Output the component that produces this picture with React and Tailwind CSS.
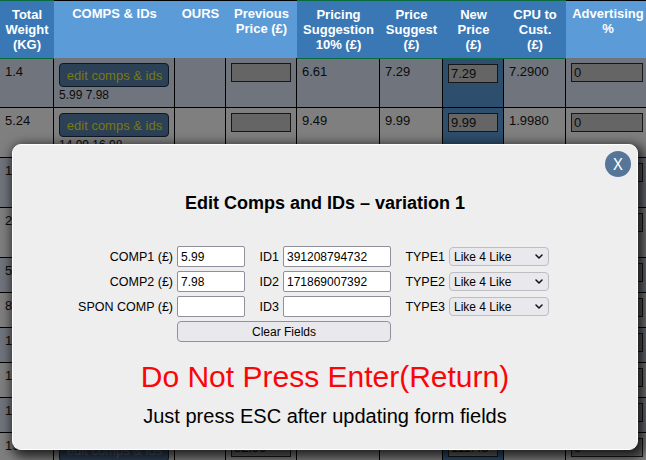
const columns = [
  { lines: ['Total', 'Weight', '(KG)'], dark: true },
  { lines: ['COMPS & IDs'] },
  { lines: ['OURS'] },
  { lines: ['Previous', 'Price (£)'] },
  { lines: ['Pricing', 'Suggestion', '10% (£)'], dark: true },
  { lines: ['Price', 'Suggest', '(£)'], dark: true },
  { lines: ['New', 'Price', '(£)'], dark: true },
  { lines: ['CPU to', 'Cust.', '(£)'], dark: true },
  { lines: ['Advertising', '%'] },
];

const rows = [
  { weight: '1.4', comps: '5.99 7.98', s10: '6.61', s: '7.29', price: '7.29', cpu: '7.2900', h: 'h-[50px]' },
  { weight: '5.24', comps: '14.99 16.98', s10: '9.49', s: '9.99', price: '9.99', cpu: '1.9980', h: 'h-[50px]' },
  { weight: '1', h: 'h-[50px]' },
  { weight: '2', h: 'h-[50px]' },
  { weight: '5', h: 'h-[35px]' },
  { weight: '8', h: 'h-[35px]' },
  { weight: '1', h: 'h-[35px]' },
  { weight: '1', h: 'h-[35px]' },
  { weight: '1', h: 'h-[35px]' },
  { weight: '19', prev: '82.99', price: '111.48', h: 'h-[35px]' },
];

const gridCols = 'grid grid-cols-[54px_121px_51px_71px_83px_63px_61px_62px_84px]';
const cell = 'border-r border-b border-black pl-[5px] pt-[5px] overflow-hidden';
const field = 'h-[19px] border border-[#161616] bg-[#656565] pl-[2px] leading-[18px]';

function Header() {
  return (
    <div className={`${gridCols} h-[58px] text-center text-[13px] leading-[15px] font-bold text-white`}>
      {columns.map((c) => (
        <div
          key={c.lines.join(' ')}
          className={
            c.dark
              ? 'z-10 h-[59px] border-y border-[#086b3c] bg-[#3a78b5] pt-[6px]'
              : 'h-[58px] border-t border-black bg-[#5b9bd8] pt-[5px]'
          }
        >
          {c.lines.map((l) => (
            <div key={l} className="whitespace-nowrap">{l}</div>
          ))}
        </div>
      ))}
    </div>
  );
}

function Row({ row, index }) {
  const first = index === 0;
  const last = index === rows.length - 1;
  // Only the first two rows and the last one show beside the dialog's edges.
  const filled = index < 2 || last;
  const plain = first ? 'border-r border-b border-black pl-[5px] pt-[6px]' : cell;
  return (
    <div className={`${gridCols} ${row.h} ${index % 2 ? 'bg-[#7f7f7f]' : 'bg-[#70757d]'} text-[13px] leading-[15px] text-[#0b0b0b]`}>
      <div className={plain}>{row.weight}</div>
      <div className={cell}>
        {filled && (
          <div
            className={`h-6 w-[110px] rounded-[4px] border border-[#0d1825] bg-[#2c4056] pl-px text-center leading-[24px] ${last ? 'text-[#5c636c]' : 'text-[#797a10]'}`}
          >
            edit comps &amp; ids
          </div>
        )}
        <div className="mt-px text-[12px] leading-[15px]">{row.comps}</div>
      </div>
      <div className={cell} />
      <div className={cell}>
        <div className={`${field} w-[60px]`}>{row.prev}</div>
      </div>
      <div className={plain}>{row.s10}</div>
      <div className={plain}>{row.s}</div>
      <div className={`${cell} bg-[#2d4e6c]`}>
        <div className={`${field} ${first ? 'mt-px' : ''} w-[50px]`}>{row.price}</div>
      </div>
      <div className={plain}>{row.cpu}</div>
      <div className={cell}>
        <div className={`${field} w-[72px]`}>{filled ? '0' : ''}</div>
      </div>
    </div>
  );
}

const fields = [
  { comp: 'COMP1 (£)', value: '5.99', id: 'ID1', idValue: '391208794732', type: 'TYPE1' },
  { comp: 'COMP2 (£)', value: '7.98', id: 'ID2', idValue: '171869007392', type: 'TYPE2' },
  { comp: 'SPON COMP (£)', value: '', id: 'ID3', idValue: '', type: 'TYPE3' },
];

const input = 'h-[21px] rounded-[2px] border border-[#8f8f9d] bg-white pl-[3px] leading-[20px]';
const label = 'pt-[2px] text-right text-[12.5px] leading-[15px]';

function Modal() {
  return (
    <div className="absolute top-[144px] left-[12px] z-20 h-[306px] w-[626px] rounded-[9px] border border-white bg-[#eeeeee] text-black shadow-[3px_4px_12px_3px_rgba(0,0,0,0.75)]">
      <div className="absolute top-[6px] right-[6px] flex h-[26px] w-[26px] items-center justify-center rounded-full bg-[#557699] pb-px font-['Noto_Sans',sans-serif] text-[16px] leading-none text-white">
        X
      </div>
      <h2 className="mt-[47px] text-center text-[18px] leading-[22px] font-bold">Edit Comps and IDs – variation 1</h2>
      <div className="mt-[32px] ml-[60px] flex flex-col gap-1 text-[12px]">
        {fields.map((f) => (
          <div key={f.id} className="flex h-[21px] items-center whitespace-nowrap">
            <span className={`${label} w-[100px]`}>{f.comp}</span>
            <div className={`${input} ml-[4px] w-[68px]`}>{f.value}</div>
            <span className={`${label} w-[34px]`}>{f.id}</span>
            <div className={`${input} ml-[4px] w-[108px]`}>{f.idValue}</div>
            <span className={`${label} w-[54px]`}>{f.type}</span>
            <div className="ml-[4px] flex h-[19px] w-[100px] items-center justify-between rounded-[4px] border border-[#bdbdc4] bg-[#e9e9ed] pr-[5px] pl-[4px]">
              <span>Like 4 Like</span>
              <svg width="8" height="6" viewBox="0 0 8 6" fill="none" stroke="#111" strokeWidth="1.5" strokeLinecap="round" strokeLinejoin="round">
                <path d="M1 1l3 3 3-3" />
              </svg>
            </div>
          </div>
        ))}
        <div className="ml-[104px] h-[21px] w-[214px] rounded-[4px] border border-[#8f8f9d] bg-[#e9e9ed] text-center leading-[20px]">
          Clear Fields
        </div>
      </div>
      <p className="mt-[17px] text-center text-[30px] leading-[36px] text-[#fb0509]">Do Not Press Enter(Return)</p>
      <p className="mt-[9px] text-center text-[20px] leading-[24px]">Just press ESC after updating form fields</p>
    </div>
  );
}

export default function App() {
  return (
    <div className="relative h-[460px] w-[646px] overflow-hidden bg-[#7f7f7f] font-['Liberation_Sans',Arial,sans-serif]">
      <Header />
      {rows.map((row, i) => (
        <Row key={i} row={row} index={i} />
      ))}
      <Modal />
    </div>
  );
}
